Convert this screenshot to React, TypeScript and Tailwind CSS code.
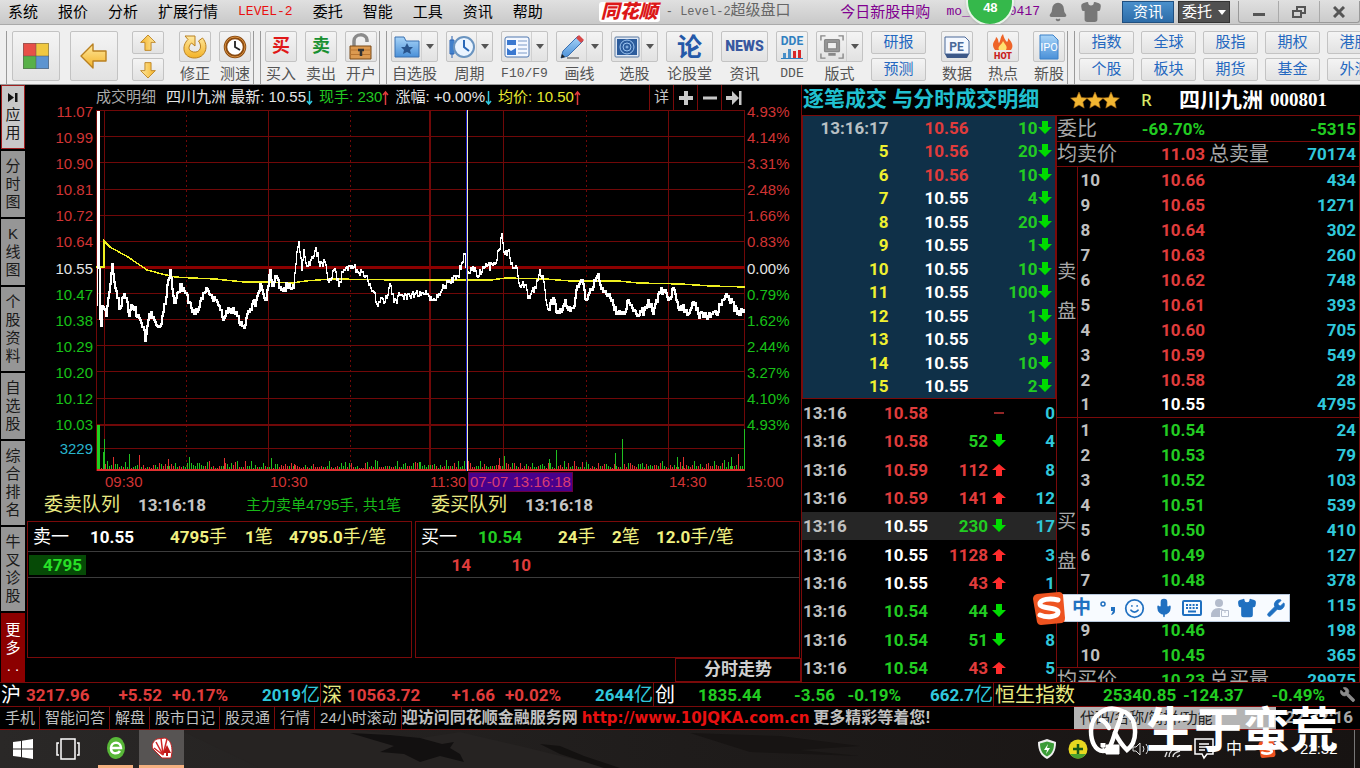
import React from 'react';
import { Bell, Shirt, Wrench, Mic, Smile } from 'lucide-react';

type Tone = 'red' | 'green' | 'white';
type Dir = 'up' | 'down' | 'flat';

const toneClass: Record<Tone, string> = {
    red: 'text-[#e03c3c]',
    green: 'text-[#22cc22]',
    white: 'text-white',
};

// Bold condensed figures used in every quote table
const NUM = "font-['Roboto','Noto_Sans_CJK_SC',sans-serif] font-bold text-[17px] leading-5";
const TOOL_BTN = 'flex items-center justify-center rounded-[2px] border border-[#c3c3c3] bg-linear-to-b from-[#f4f4f4] to-[#e2e2e2]';

const sideTabs = [
    { label: '分时图', size: 'h-[66px]' },
    { label: 'K线图', size: 'h-[66px]' },
    { label: '个股资料', size: 'h-[84px]' },
    { label: '自选股', size: 'h-[66px]' },
    { label: '综合排名', size: 'h-[84px]' },
    { label: '牛叉诊股', size: 'h-[84px]' },
];

const prices = ['11.07', '10.99', '10.90', '10.81', '10.72', '10.64', '10.55', '10.47', '10.38', '10.29', '10.20', '10.12', '10.03'];
const percents = ['4.93%', '4.14%', '3.31%', '2.48%', '1.66%', '0.83%', '0.00%', '0.79%', '1.62%', '2.44%', '3.27%', '4.10%', '4.93%'];

const ticks: { t: string; p: string; tone: Tone; v: string }[] = [
    { t: '13:16:17', p: '10.56', tone: 'red', v: '10' },
    { t: '5', p: '10.56', tone: 'red', v: '20' },
    { t: '6', p: '10.56', tone: 'red', v: '10' },
    { t: '7', p: '10.55', tone: 'white', v: '4' },
    { t: '8', p: '10.55', tone: 'white', v: '20' },
    { t: '9', p: '10.55', tone: 'white', v: '1' },
    { t: '10', p: '10.55', tone: 'white', v: '10' },
    { t: '11', p: '10.55', tone: 'white', v: '100' },
    { t: '12', p: '10.55', tone: 'white', v: '1' },
    { t: '13', p: '10.55', tone: 'white', v: '9' },
    { t: '14', p: '10.55', tone: 'white', v: '10' },
    { t: '15', p: '10.55', tone: 'white', v: '2' },
];

const trades: { p: string; tone: Tone; v: string; dir: Dir; n: string; active?: boolean }[] = [
    { p: '10.58', tone: 'red', v: '', dir: 'flat', n: '0' },
    { p: '10.58', tone: 'red', v: '52', dir: 'down', n: '4' },
    { p: '10.59', tone: 'red', v: '112', dir: 'up', n: '8' },
    { p: '10.59', tone: 'red', v: '141', dir: 'up', n: '12' },
    { p: '10.55', tone: 'white', v: '230', dir: 'down', n: '17', active: true },
    { p: '10.55', tone: 'white', v: '1128', dir: 'up', n: '3' },
    { p: '10.55', tone: 'white', v: '43', dir: 'up', n: '1' },
    { p: '10.54', tone: 'green', v: '44', dir: 'down', n: '' },
    { p: '10.54', tone: 'green', v: '51', dir: 'down', n: '8' },
    { p: '10.54', tone: 'green', v: '43', dir: 'up', n: '5' },
];

type Level = [string, string, string, Tone];
const asks: Level[] = [
    ['10', '10.66', '434', 'red'], ['9', '10.65', '1271', 'red'], ['8', '10.64', '302', 'red'],
    ['7', '10.63', '260', 'red'], ['6', '10.62', '748', 'red'], ['5', '10.61', '393', 'red'],
    ['4', '10.60', '705', 'red'], ['3', '10.59', '549', 'red'], ['2', '10.58', '28', 'red'],
    ['1', '10.55', '4795', 'white'],
];
const bids: Level[] = [
    ['1', '10.54', '24', 'green'], ['2', '10.53', '79', 'green'], ['3', '10.52', '103', 'green'],
    ['4', '10.51', '539', 'green'], ['5', '10.50', '410', 'green'], ['6', '10.49', '127', 'green'],
    ['7', '10.48', '378', 'green'], ['', '', '115', 'green'], ['9', '10.46', '198', 'green'],
    ['10', '10.45', '365', 'green'],
];

// Chart series, plot box is 648 x 361
const pricePts: [number, number][] = [
    [4, 158], [4, 201], [6, 216], [7, 196], [11, 206], [13, 188], [17, 154], [20, 178], [22, 188], [25, 198],
    [29, 184], [31, 188], [34, 206], [37, 196], [44, 208], [49, 220], [50, 231], [53, 210], [56, 202], [60, 212],
    [64, 217], [67, 206], [70, 194], [73, 170], [75, 160], [78, 186], [80, 193], [85, 174], [88, 178], [94, 192],
    [97, 202], [102, 202], [106, 188], [111, 178], [117, 188], [124, 196], [128, 210], [133, 198], [140, 204],
    [148, 216], [154, 202], [161, 190], [165, 174], [171, 190], [175, 160], [177, 176], [181, 166], [186, 180],
    [194, 174], [198, 178], [201, 142], [203, 132], [206, 160], [208, 140], [211, 156], [215, 150], [220, 138],
    [224, 156], [229, 152], [233, 172], [238, 160], [243, 176], [248, 160], [254, 156], [261, 160], [268, 166],
    [274, 174], [278, 182], [281, 194], [286, 188], [289, 192], [294, 174], [298, 192], [304, 185], [314, 186],
    [324, 182], [332, 184], [337, 190], [346, 180], [354, 172], [362, 166], [367, 152], [369, 144], [371, 168],
    [372, 162], [379, 158], [383, 166], [388, 158], [399, 154], [403, 140], [406, 124], [408, 142], [413, 140],
    [415, 154], [421, 158], [424, 176], [427, 172], [433, 186], [440, 178], [444, 160], [448, 172], [452, 199],
    [457, 188], [460, 202], [465, 202], [469, 190], [472, 200], [477, 198], [481, 176], [485, 170], [490, 190],
    [495, 180], [501, 166], [506, 178], [514, 188], [520, 204], [528, 204], [532, 190], [536, 198], [541, 206],
    [548, 200], [552, 190], [557, 204], [563, 182], [568, 180], [572, 190], [578, 180], [582, 198], [590, 200],
    [592, 204], [597, 192], [602, 204], [612, 206], [620, 204], [626, 190], [631, 187], [636, 192], [641, 204], [648, 200],
];

const avgLine = '0,157 8,157 8,131 14,137 32,147 51,160 66,164 79,167 96,168 119,169 148,172 174,172 196,173 209,171 234,169 304,170 394,170 409,168 449,169 474,171 522,171 542,173 584,174 614,176 648,177';

const spikes: [number, number, 'r' | 'g'][] = [
    [7, 18, 'g'], [8, 31, 'g'], [17, 13, 'r'], [33, 16, 'g'], [43, 15, 'r'], [72, 11, 'r'], [93, 13, 'g'], [128, 12, 'r'],
    [175, 12, 'g'], [198, 6, 'r'], [233, 9, 'g'], [279, 10, 'g'], [369, 9, 'r'], [402, 12, 'r'], [407, 14, 'g'], [452, 11, 'g'],
    [459, 20, 'g'], [518, 17, 'g'], [525, 31, 'g'], [580, 13, 'g'], [586, 13, 'r'], [597, 9, 'g'], [634, 13, 'g'], [641, 16, 'r'], [647, 41, 'g'],
];

const noise = (i: number) => {
    const x = Math.sin(i * 127.1) * 43758.5453;
    return x - Math.floor(x);
};

const buildPricePath = () => {
    let d = '';
    pricePts.forEach(([x, y], i) => {
        if (i === 0) { d = `M${x} ${y}`; return; }
        const [px, py] = pricePts[i - 1];
        for (let s = px + 1; s <= x; s++) {
            const k = (s - px) / (x - px);
            const jitter = s === x ? 0 : Math.round((noise(s) - 0.5) * 8);
            d += `V${Math.round(py + (y - py) * k) + jitter}H${s}`;
        }
    });
    return d;
};

const hLines = [26, 52, 79, 105, 131, 183, 209, 235, 261, 288, 338];

const Chart: React.FC = () => (
    <svg viewBox="0 0 648 361" preserveAspectRatio="none" className="block w-full h-full" shapeRendering="crispEdges">
        <g stroke="#700808" strokeWidth="1">
            {hLines.map(y => <path key={y} d={`M0 ${y + 0.5}H648`} />)}
            <path d="M0 .5H648M.5 0V361M8.5 0V361M172.5 0V361M406.5 0V361M571.5 0V361M647.5 0V361" />
            <path d="M90.5 0V361M254.5 0V361M489.5 0V361" strokeDasharray="2 3" />
            <path d="M0 315H648" strokeWidth="2" />
            <path d="M333 0V361" strokeWidth="2" />
            <path d="M0 157.500H648" stroke="#8c0000" strokeWidth="3" />
        </g>
        {/* Volume */}
        {Array.from({ length: 322 }, (_, i) => {
            const h = 1 + Math.round(noise(i + 11) ** 3 * 7 + noise(i + 500) * 2);
            return <rect key={i} x={3 + i * 2} y={359 - h} width="1" height={h} fill={noise(i + 77) > 0.5 ? '#e03030' : '#20c020'} />;
        })}
        {spikes.map(([x, h, c]) => <rect key={x} x={x} y={360 - h} width="1" height={h} fill={c === 'r' ? '#e03030' : '#20c020'} />)}
        <rect x="1" y="315" width="3" height="45" fill="#20d020" />
        <rect x="1" y="359" width="647" height="2" fill="#e03030" />
        <polyline points={avgLine} fill="none" stroke="#f0f020" strokeWidth="1.5" />
        <path d={buildPricePath()} fill="none" stroke="#fff" strokeWidth="1.6" />
        <rect x="1" y="1" width="3" height="158" fill="#fff" />
        <path d="M1 158V196" stroke="#fff" />
        {/* Cross cursor */}
        <rect x="369" y="0" width="1" height="361" fill="#1818c8" />
        <rect x="370" y="0" width="1" height="361" fill="#f0eeb0" />
    </svg>
);

const Arrow: React.FC<{ dir: Dir }> = ({ dir }) => (
    <svg viewBox="0 0 14 14" className="block w-3.5 h-3.5" role="img" aria-label={dir}>
        {dir === 'flat' && <path d="M2 7h10" stroke="#e03c3c" strokeWidth="1.3" />}
        {dir === 'down' && <path d="M4 0h6v6h4L7 13 0 6h4z" fill="#00dc00" />}
        {dir === 'up' && <path d="M4 13h6V7h4L7 1 0 7h4z" fill="#ff2c2c" />}
    </svg>
);

// Thin arrow behind a header figure
const Mark: React.FC<{ up?: boolean }> = ({ up }) => (
    <svg viewBox="0 0 7 16" className={`w-[7px] h-4 ${up ? 'text-[#e03c3c]' : 'text-[#30c8e0]'}`} fill="none" stroke="currentColor" strokeWidth="1.5">
        {up ? <path d="M3.5 15V2M1 5l2.500-3L6 5" /> : <path d="M3.500 1v13M1 11l2.500 3L6 11" />}
    </svg>
);

const Caret: React.FC<{ className?: string }> = ({ className = 'text-[#555]' }) => (
    <svg viewBox="0 0 8 5" className={`w-2 h-[5px] ${className}`}><path d="M0 0h8L4 5z" fill="currentColor" /></svg>
);

const Handle: React.FC<{ first?: boolean }> = ({ first }) => (
    <div className={`flex h-[54px] justify-between shrink-0 ${first ? 'w-3' : 'w-3.5'}`}>
        {first ? null : <span className="ml-0.5 w-px bg-[#9a9a9a]" />}
        <span className={`w-[3px] border-r border-b border-[#9a9a9a] ${first ? 'ml-1' : 'mr-1'}`} />
    </div>
);

interface ToolProps {
    label: string;
    wide?: boolean;
    split?: boolean;
    mono?: boolean;
    children: React.ReactNode;
}

const Tool: React.FC<ToolProps> = ({ label, wide, split, mono, children }) => (
    <button className={`flex flex-col items-center shrink-0 ${wide ? 'w-[47px]' : 'w-8'}`}>
        <span className={`${TOOL_BTN} h-[31px] w-full`}>
            <span className="flex flex-1 items-center justify-center">{children}</span>
            {split && <span className="flex h-full w-4 items-center justify-center border-l border-[#d0d0d0]"><Caret /></span>}
        </span>
        <span className={`mt-0.5 leading-5 whitespace-nowrap text-[#555] ${mono ? "font-['Liberation_Mono',monospace] text-[13px]" : 'text-[15px]'}`}>{label}</span>
    </button>
);

const TextTool: React.FC<{ label: string }> = ({ label }) => (
    <button className={`${TOOL_BTN} h-[23px] w-[55px] shrink-0 text-[15px] text-[#2468c0]`}>{label}</button>
);

const GoldArrow: React.FC<{ className: string }> = ({ className }) => (
    <svg viewBox="0 0 28 26" className={className}>
        <path d="M1 13 13 1v7h13v10H13v7z" fill="url(#gold)" stroke="#b98020" strokeWidth="1.4" strokeLinejoin="round" />
    </svg>
);

const SogouLogo: React.FC<{ className: string }> = ({ className }) => (
    <svg viewBox="0 0 34 34" className={className}>
        <path d="M5 3 27 1q3 0 4 3l2 23q0 4-3 5L9 34q-3 0-4-3L1 8q0-4 4-5z" fill="#ee5320" />
        <path d="M26 9C18 7 8 8 8 13s18 3 18 8-11 6-18 3" fill="none" stroke="#fff" strokeWidth="5" strokeLinecap="round" />
    </svg>
);

const MenuBar: React.FC = () => (
    <header className="relative flex h-[25px] items-center overflow-hidden border-b border-[#aaa] bg-linear-to-b from-[#e0e0e0] to-[#c9c9c9] pl-2 text-[15px] whitespace-nowrap text-black">
        <nav className="flex shrink-0 gap-5">
            <button>系统</button>
            <button>报价</button>
            <button>分析</button>
            <button>扩展行情</button>
            <button className="font-['Liberation_Mono',monospace] text-[13px] text-[#e81010]">LEVEL-2</button>
            <button>委托</button>
            <button>智能</button>
            <button>工具</button>
            <button>资讯</button>
            <button>帮助</button>
        </nav>
        <div className="ml-14 flex shrink-0 items-center gap-1.5">
            <span className="rounded-[3px] bg-white px-0.5 text-[19px] leading-5 font-black text-[#dc1818] italic">同花顺</span>
            <span className="font-['Liberation_Mono','Noto_Sans_CJK_SC',monospace] text-[12px] text-[#666]">- Level-2<span className="text-[15px]">超级盘口</span></span>
        </div>
        <div className="ml-auto flex shrink-0 items-center text-[#800090]">
            <a href="#ipo">今日新股申购</a>
            <span className="relative ml-4 font-['Liberation_Mono',monospace] text-[13px]">mo_375770417
                <span className="absolute -top-6 left-5 flex h-12 w-12 items-end justify-center rounded-full border-2 border-[#e8f4e8] bg-[#35b84b] pb-2 font-['Liberation_Sans',sans-serif] leading-4 font-bold text-white shadow">48</span>
            </span>
            <button aria-label="消息" className="ml-2 text-[#777]"><Bell size={20} fill="currentColor" /></button>
            <button aria-label="皮肤" className="ml-3 text-[#777]"><Shirt size={22} fill="currentColor" /></button>
            <button className="ml-5 h-[22px] w-[52px] border border-[#1f4f80] bg-linear-to-b from-[#4a90cc] to-[#2c6ca8] leading-5 text-white">资讯</button>
            <button className="ml-1 flex h-[22px] w-[52px] items-center justify-center gap-1.5 border border-[#333] bg-[#505050] text-white">委托<Caret className="text-white" /></button>
            <div className="ml-2 flex h-[22px] w-[122px] divide-x divide-[#aaa] rounded-b-[3px] border border-t-0 border-[#999] text-[#555]">
                <button aria-label="最小化" className="flex flex-1 items-end justify-center pb-1.5"><span className="h-[3px] w-3 bg-[#555]" /></button>
                <button aria-label="还原" className="flex flex-1 items-center justify-center">
                    <svg viewBox="0 0 14 12" className="w-3.5 h-3" fill="none" stroke="currentColor" strokeWidth="2"><path d="M1 5h8v6H1zM5 4V1h8v6h-3" /></svg>
                </button>
                <button aria-label="关闭" className="flex flex-1 items-center justify-center">
                    <svg viewBox="0 0 12 12" className="w-3 h-3" stroke="currentColor" strokeWidth="3"><path d="m1 1 10 10M11 1 1 11" /></svg>
                </button>
            </div>
        </div>
    </header>
);

const Toolbar: React.FC = () => (
    <div className="flex h-[60px] items-start overflow-hidden border-b border-[#999] bg-[#efefef] pt-1.5">
        <svg className="absolute h-0 w-0">
            <defs>
                <linearGradient id="gold" x1="0" y1="0" x2="0" y2="1"><stop offset="0" stopColor="#ffe9a0" /><stop offset="1" stopColor="#f3b226" /></linearGradient>
                <linearGradient id="sky" x1="0" y1="0" x2="0" y2="1"><stop offset="0" stopColor="#a8d4f8" /><stop offset="1" stopColor="#4a90d8" /></linearGradient>
            </defs>
        </svg>
        <Handle first />
        <button aria-label="首页" className={`${TOOL_BTN} h-[50px] w-12 shrink-0`}>
            <svg viewBox="0 0 26 26" className="w-[26px] h-[26px]">
                <path d="M0 0h13v13H0z" fill="#e85048" /><path d="M13 0h13v13H13z" fill="#f0c840" />
                <path d="M0 13h13v13H0z" fill="#58b048" /><path d="M13 13h13v13H13z" fill="#5c94d0" />
                <path d="M.5.5h25v25H.5zM13 0v26M0 13h26" fill="none" stroke="#555" strokeOpacity=".5" />
            </svg>
        </button>
        <button aria-label="后退" className={`${TOOL_BTN} ml-2.5 h-[50px] w-12 shrink-0`}><GoldArrow className="w-7 h-[26px]" /></button>
        <div className="ml-3.5 flex w-8 shrink-0 flex-col gap-1">
            <button aria-label="上一个" className={`${TOOL_BTN} h-[23px]`}><GoldArrow className="h-4 w-[18px] rotate-90" /></button>
            <button aria-label="下一个" className={`${TOOL_BTN} h-[23px]`}><GoldArrow className="h-4 w-[18px] -rotate-90" /></button>
        </div>
        <div className="ml-[15px] flex gap-2">
            <Tool label="修正">
                <svg viewBox="0 0 26 26" className="w-[26px] h-[26px]">
                    <path d="M3 2h10v10l-3.500-3c-4 4-3 8 2 9 7 1 9-6 5-11l4-3c7 8 3 20-8 20C1 24-1 12 6 5.500z" fill="url(#gold)" stroke="#b98020" strokeLinejoin="round" />
                </svg>
            </Tool>
            <Tool label="测速">
                <svg viewBox="0 0 24 24" className="w-6 h-6">
                    <circle cx="12" cy="12" r="9.500" fill="#fff" stroke="#8a4a10" strokeWidth="3.500" /><circle cx="12" cy="12" r="10" fill="none" stroke="#d89040" />
                    <path d="M12 6v6l5 3" fill="none" stroke="#222" strokeWidth="1.800" />
                </svg>
            </Tool>
        </div>
        <Handle />
        <div className="flex gap-2">
            <Tool label="买入"><b className="text-[18px] text-[#e01818]">买</b></Tool>
            <Tool label="卖出"><b className="text-[18px] text-[#189030]">卖</b></Tool>
            <Tool label="开户">
                <svg viewBox="0 0 24 28" className="w-6 h-7">
                    <path d="M5 13V8c0-8 13-8 13-1v2" fill="none" stroke="#8a8a8a" strokeWidth="3.500" /><path d="M1 13h21v13H1z" fill="#dc9a50" stroke="#7a4a18" />
                    <path d="M1 17h21M1 21.500h21" stroke="#b87430" /><path d="M9 17h6M12 17v6" stroke="#333" strokeWidth="2.500" />
                </svg>
            </Tool>
        </div>
        <Handle />
        <div className="flex gap-2">
            <Tool label="自选股" wide split>
                <svg viewBox="0 0 26 24" className="w-[26px] h-6"><path d="M1 22V2h9l2 4h13v16z" fill="url(#sky)" stroke="#3a70b0" /><path d="m13 8 2 4h4l-3 3 1 4-4-2-4 2 1-4-3-3h4z" fill="#28548c" /></svg>
            </Tool>
            <Tool label="周期" wide split>
                <svg viewBox="0 0 26 26" className="w-[26px] h-[26px]">
                    <path d="M1 6h4v14H1zM3 2v22" fill="#5aa0e8" stroke="#2860b0" /><circle cx="15" cy="13" r="10" fill="#eaf4ff" stroke="#6a94c0" strokeWidth="2" />
                    <path d="M15 6v7l5 4" fill="none" stroke="#2868b8" strokeWidth="2" />
                </svg>
            </Tool>
            <Tool label="F10/F9" wide split mono>
                <svg viewBox="0 0 26 22" className="w-[26px] h-[22px]"><rect x="1" y="1" width="24" height="20" rx="2" fill="#f4f8ff" stroke="#5078b0" /><path d="M3 4h9v5H3zM3 12l4 3 5-3v7H3z" fill="#3a78d0" /><path d="M14 5h9M14 9h9M14 13h9M14 17h9" stroke="#7a9ac8" /></svg>
            </Tool>
            <Tool label="画线" wide split>
                <svg viewBox="0 0 26 26" className="w-[26px] h-[26px]"><path d="M2 24 4 17 19 2l5 5L9 22z" fill="url(#sky)" stroke="#3a70b0" /><path d="m17 4 3-3 5 5-3 3z" fill="#d84848" /><path d="m2 24 1-4 3 3z" fill="#222" /><path d="M8 24h12" stroke="#444" /></svg>
            </Tool>
            <Tool label="选股" wide split>
                <svg viewBox="0 0 26 22" className="w-[26px] h-[22px]"><rect x="1" y="1" width="24" height="20" rx="1" fill="#e0e8f4" stroke="#5878a0" /><path d="M3 3h20v16H3z" fill="#2c5c9c" /><g fill="none" stroke="#9cc4f0"><circle cx="13" cy="11" r="7" /><circle cx="13" cy="11" r="4" /><circle cx="13" cy="11" r="1" /></g></svg>
            </Tool>
            <Tool label="论股堂" wide><b className="text-[25px] leading-7 text-[#2458a8]">论</b></Tool>
            <Tool label="资讯" wide><b className="font-['Roboto',sans-serif] text-[14px] font-black text-[#3858a0]">NEWS</b></Tool>
            <Tool label="DDE" mono>
                <span className="flex flex-col items-center">
                    <b className="font-['Roboto',sans-serif] text-[12px] leading-3 text-[#3080c0]">DDE</b>
                    <svg viewBox="0 0 24 12" className="w-6 h-3"><path d="M3 6h3v5H3zM8 2h3v9H8z" fill="#4a90c8" /><path d="M13 4h3v7h-3zM18 3h3v8h-3z" fill="#d82828" /><path d="M1 11.500h22" stroke="#3080c0" /></svg>
                </span>
            </Tool>
            <Tool label="版式" wide split>
                <svg viewBox="0 0 26 26" className="w-6 h-6" fill="none" stroke="#888" strokeWidth="1.500"><path d="M1 6V1h5M20 1h5v5M1 20v5h5M20 25h5v-5" /><rect x="5" y="5" width="16" height="13" rx="1" fill="#999" /><path d="M8 8h10v7H8z" fill="#eee" /><path d="M9 21h8" strokeWidth="3" /></svg>
            </Tool>
            <div className="flex flex-col gap-1"><TextTool label="研报" /><TextTool label="预测" /></div>
        </div>
        <div className="ml-[15px] flex gap-3.5">
            <Tool label="数据">
                <svg viewBox="0 0 26 24" className="w-[26px] h-6"><path d="M1 2h20l4 4v13H1z" fill="#f4f8ff" stroke="#4a6898" /><path d="M1 19h24l-2 4H3z" fill="#3c5888" /><text x="12.500" y="15.500" textAnchor="middle" fontFamily="Roboto" fontWeight="700" fontSize="12" fill="#4a6898">PE</text></svg>
            </Tool>
            <Tool label="热点">
                <svg viewBox="0 0 24 26" className="w-6 h-[26px]"><path d="M4 16C-1 9 5 7 5 3c3 2 2 5 3 6 2-3 1-6 4-9 1 4 2 6 4 8 1-1 1-2 1-4 4 4 6 8 3 12z" fill="#ee6428" /><path d="M8 16c-2-4 3-5 4-9 2 4 5 5 3 9z" fill="#ffe070" /><text x="12" y="25" textAnchor="middle" fontFamily="Roboto" fontWeight="900" fontSize="9" fill="#c82020">HOT</text></svg>
            </Tool>
            <Tool label="新股">
                <svg viewBox="0 0 22 26" className="w-[22px] h-[26px]"><path d="M2 1h13l5 5v19H2z" fill="url(#sky)" stroke="#3a80c8" /><text x="11" y="17" textAnchor="middle" fontFamily="Roboto" fontSize="11" fill="#fff">IPO</text></svg>
            </Tool>
        </div>
        <Handle />
        <div className="grid shrink-0 grid-flow-col grid-rows-2 gap-x-[7px] gap-y-1">
            {['指数', '个股', '全球', '板块', '股指', '期货', '期权', '基金', '港股', '外汇'].map(l => <TextTool key={l} label={l} />)}
        </div>
    </div>
);

const SideTabs: React.FC = () => (
    <nav className="flex w-[26px] shrink-0 flex-col gap-0.5 pr-px pl-px text-[15px] leading-[18px] text-[#1a1a1a]">
        <button className="flex h-16 flex-col items-center justify-center border border-[#a02020] bg-[#c8c8c8]">
            <svg viewBox="0 0 10 9" className="mb-1 w-2.5 h-[9px]"><path d="M0 0v9l6-4.500zM7 0h2.500v9H7z" fill="#111" /></svg>
            <span className="w-4">应用</span>
        </button>
        {sideTabs.map(t => (
            <button key={t.label} className={`flex items-center justify-center bg-[#969696] ${t.size}`}>
                <span className="w-4 break-all">{t.label}</span>
            </button>
        ))}
        <button className="flex flex-1 items-center justify-center bg-[#8c0000] text-white"><span className="w-4 break-all">更多<br />. .</span></button>
    </nav>
);

const Axis: React.FC<{ values: string[]; side: 'left' | 'right' }> = ({ values, side }) => (
    <div className={`flex shrink-0 flex-col pt-[13px] pb-[13px] leading-none ${side === 'left' ? 'w-[70px] items-end pr-[3px]' : 'w-14 pl-0.5'}`}>
        {values.map((v, i) => (
            <span key={i} className={`flex flex-1 items-center ${i < 6 ? 'text-[#d03434]' : i === 6 ? 'text-[#e4e4e4]' : 'text-[#18c018]'}`}>{v}</span>
        ))}
        <span className="flex h-5 items-center text-[#28b4cc]">{side === 'left' ? '3229' : ''}</span>
    </div>
);

const Unit: React.FC<{ children: React.ReactNode }> = ({ children }) => <span className="text-[18px] font-normal">{children}</span>;

interface QueueProps {
    side: string;
    price: string;
    tone: Tone;
    hands: string;
    count: string;
    avg: string;
    children: React.ReactNode;
}

const QueueBox: React.FC<QueueProps> = ({ side, price, tone, hands, count, avg, children }) => (
    <div className={`flex-1 border border-[#7a0a0a] ${NUM}`}>
        <div className="flex h-[30px] items-center border-b border-[#3c3c3c] pl-[5px] text-[#f0f080]">
            <span className="w-[57px] text-[18px] font-normal text-white">{side}</span>
            <span className={`w-20 ${toneClass[tone]}`}>{price}</span>
            <span className={tone === 'white' ? 'w-[75px]' : 'w-[54px]'}>{hands}<Unit>手</Unit></span>
            <span className="w-11">{count}<Unit>笔</Unit></span>
            <span>{avg}<Unit>手/笔</Unit></span>
        </div>
        <div className="flex h-[26px] items-center border-b border-[#3c3c3c]">{children}</div>
    </div>
);

const ChartPanel: React.FC = () => (
    <section className="flex min-w-0 flex-1 flex-col">
        <div className="flex min-h-0 flex-1 text-[15px]">
            <Axis values={prices} side="left" />
            <div className="flex min-w-0 flex-1 flex-col">
                <div className="flex h-[25px] shrink-0 items-center whitespace-nowrap text-[#e4e4e4]">
                    <span className="w-[70px] text-[#aaa]">成交明细</span>
                    <span>四川九洲 最新: 10.55</span><Mark />
                    <span className="ml-1.5 text-[#22c822]">现手: 230</span><Mark up />
                    <span className="ml-1.5">涨幅: +0.00%</span><Mark />
                    <span className="ml-1.5 text-[#e8e830]">均价: 10.50</span><Mark up />
                    <div className="ml-auto flex h-full text-[#c8c8c8]">
                        <button className="w-6 border-l border-[#7a0a0a]">详</button>
                        <button aria-label="放大" className="flex w-6 items-center justify-center border-l border-[#7a0a0a]"><svg viewBox="0 0 14 14" className="w-3.5 h-3.5"><path d="M7 0v14M0 7h14" stroke="currentColor" strokeWidth="4" /></svg></button>
                        <button aria-label="缩小" className="flex w-6 items-center justify-center border-l border-[#7a0a0a]"><svg viewBox="0 0 14 14" className="w-3.5 h-3.5"><path d="M0 7h14" stroke="currentColor" strokeWidth="3" /></svg></button>
                        <button aria-label="收起" className="flex w-6 items-center justify-center border-l border-[#7a0a0a]"><svg viewBox="0 0 16 14" className="w-4 h-3.5"><path d="M0 5h6V0l7 7-7 7V9H0zM13 0h2.500v14H13z" fill="currentColor" /></svg></button>
                    </div>
                </div>
                <div className="min-h-0 flex-1"><Chart /></div>
            </div>
            <Axis values={percents} side="right" />
        </div>

        <div className="flex h-[22px] items-center pl-[79px] text-[15px] whitespace-nowrap text-[#d03434]">
            <span className="w-[165px]">09:30</span>
            <span className="w-40">10:30</span>
            <span className="w-[38px]">11:30</span>
            <span className="flex h-5 items-center border border-[#6a0040] bg-[#48008c] px-px text-[#d83c74]">07-07 13:16:18</span>
            <span className="ml-auto w-[77px]">14:30</span>
            <span className="w-[55px]">15:00</span>
        </div>

        <div className="mb-1 flex h-6 items-center pl-[18px]">
            <span className="w-[94px] text-[19px] leading-6 text-[#e8e880]">委卖队列</span>
            <span className={`w-[108px] text-[#c4c4c4] ${NUM}`}>13:16:18</span>
            <span className="w-[185px] text-[15px] text-[#18b818]">主力卖单4795手, 共1笔</span>
            <span className="w-[94px] text-[19px] leading-6 text-[#e8e880]">委买队列</span>
            <span className={`text-[#c4c4c4] ${NUM}`}>13:16:18</span>
        </div>
        <div className="flex h-[137px] gap-[3px] pr-px pl-px">
            <QueueBox side="卖一" price="10.55" tone="white" hands="4795" count="1" avg="4795.0">
                <span className="ml-px w-[57px] bg-[#064a06] pr-1 text-right text-[#28e028]">4795</span>
            </QueueBox>
            <QueueBox side="买一" price="10.54" tone="green" hands="24" count="2" avg="12.0">
                <span className="w-[55px] text-right text-[#e03c3c]">14</span>
                <span className="w-[60px] text-right text-[#e03c3c]">10</span>
            </QueueBox>
        </div>
        <div className="flex h-6 justify-end">
            <button className="w-[126px] border border-[#7a0a0a] text-[17px] leading-5 font-bold text-[#d0d0d0]">分时走势</button>
        </div>
    </section>
);

const TradePanel: React.FC = () => (
    <section className={`flex w-[255px] shrink-0 flex-col border-l border-[#7a0a0a] ${NUM}`}>
        <h2 className="h-[30px] pl-px text-[21px] leading-7 whitespace-nowrap text-[#20c0d0]">逐笔成交 与分时成交明细</h2>
        <table className="h-[284px] w-full border border-[#7a0a0a] bg-[#0f3048]">
            <tbody>
                {ticks.map((r, i) => (
                    <tr key={i}>
                        <td className={`w-[86px] text-right ${i === 0 ? 'text-[#b8c0c4]' : 'text-[#f0f030]'}`}>{r.t}</td>
                        <td className={`w-20 text-right ${toneClass[r.tone]}`}>{r.p}</td>
                        <td className="text-right text-[#22cc22]">{r.v}</td>
                        <td className="w-[18px]"><Arrow dir="down" /></td>
                    </tr>
                ))}
            </tbody>
        </table>
        <table className="w-full flex-1">
            <tbody>
                {trades.map((r, i) => (
                    <tr key={i} className={`h-7 ${r.active ? 'bg-[#262626]' : ''}`}>
                        <td className="pl-px text-[#c0c0c0]">13:16</td>
                        <td className={`w-20 text-right ${toneClass[r.tone]}`}>{r.p}</td>
                        <td className={`w-[60px] text-right ${r.dir === 'up' ? 'text-[#e03c3c]' : 'text-[#22cc22]'}`}>{r.v}</td>
                        <td className="w-5 pl-1"><Arrow dir={r.dir} /></td>
                        <td className="w-[48px] pr-px text-right text-[#30c8dc]">{r.n}</td>
                    </tr>
                ))}
            </tbody>
        </table>
    </section>
);

const LevelTable: React.FC<{ name: string; rows: Level[] }> = ({ name, rows }) => (
    <table className="w-full border-b border-[#7a0a0a]">
        <tbody>
            {rows.map(([lv, p, q, tone], i) => (
                <tr key={i} className="h-[25px]">
                    {i === 0 && (
                        <th rowSpan={10} scope="rowgroup" className="w-5 border-r border-[#7a0a0a] text-[19px] leading-10 font-normal text-[#a8a8a8]">
                            {name.split('').map(c => <span key={c} className="block">{c}</span>)}
                        </th>
                    )}
                    <td className="pl-[3px] text-[#c0c0c0]">{lv}</td>
                    <td className={`w-20 text-right ${toneClass[tone]}`}>{p}</td>
                    <td className="w-[154px] pr-[3px] text-right text-[#30c8dc]">{q}</td>
                </tr>
            ))}
        </tbody>
    </table>
);

const Summary: React.FC<{ name: string; v: string; tone: Tone; name2?: string; v2: string; v2Class: string }> = ({ name, v, tone, name2, v2, v2Class }) => (
    <div className="flex h-[25px] shrink-0 items-center border-b border-[#7a0a0a] pr-[3px]">
        <span className="w-16 text-[20px] font-normal text-[#a8a8a8]">{name}</span>
        <span className={`w-[84px] text-right ${toneClass[tone]}`}>{v}</span>
        <span className="ml-1 text-[20px] font-normal text-[#a8a8a8]">{name2}</span>
        <span className={`ml-auto ${v2Class}`}>{v2}</span>
    </div>
);

const OrderBook: React.FC = () => (
    <section className={`flex w-[304px] shrink-0 flex-col overflow-hidden ${NUM}`}>
        <div className="flex h-[30px] shrink-0 items-center pb-px pl-3.5 whitespace-nowrap">
            <svg viewBox="0 0 50 18" className="w-[50px] h-[18px]">
                {[0, 16, 32].map(x => <path key={x} transform={`translate(${x} 1)`} d="m9 0 2.400 5.500 6 .6-4.500 4 1.300 6L9 13l-5.200 3.100 1.300-6-4.500-4 6-.6z" fill="#f2b632" stroke="#a86c14" strokeWidth=".6" />)}
            </svg>
            <span className="ml-[21px] w-[38px] font-['Noto_Sans',sans-serif] font-medium text-[#d8e868]">R</span>
            <span className="text-[21px] text-white">四川九洲</span>
            <span className="ml-[7px] font-['Liberation_Serif',serif] text-[19px] text-white">000801</span>
        </div>
        <div className="flex min-h-0 flex-1 flex-col overflow-hidden border border-b-0 border-[#7a0a0a] pt-px">
            <Summary name="委比" v="-69.70%" tone="green" v2="-5315" v2Class="text-[#22cc22]" />
            <Summary name="均卖价" v="11.03" tone="red" name2="总卖量" v2="70174" v2Class="text-[#30c8dc]" />
            <LevelTable name="卖盘" rows={asks} />
            <LevelTable name="买盘" rows={bids} />
            <Summary name="均买价" v="10.23" tone="green" name2="总买量" v2="29975" v2Class="text-[#30c8dc]" />
        </div>
    </section>
);

interface IndexProps {
    name: string;
    nameClass: string;
    tone: Tone;
    value: string;
    change: string;
    pct: string;
    amount?: string;
    className: string;
}

const IndexCell: React.FC<IndexProps> = ({ name, nameClass, tone, value, change, pct, amount, className }) => (
    <div className={`flex shrink-0 items-center border-r border-[#7a0a0a] pl-px ${toneClass[tone]} ${className}`}>
        <span className={`shrink-0 text-[20px] font-normal ${nameClass}`}>{name}</span>
        <span className="w-[74px] shrink-0">{value}</span>
        <span className="flex-1 text-right">{change}</span>
        <span className="w-[66px] shrink-0 text-right">{pct}</span>
        {amount && <span className="w-[92px] shrink-0 text-right text-[#30c8dc]">{amount}<span className="text-[19px] font-normal">亿</span></span>}
    </div>
);

const IndexBar: React.FC = () => (
    <div className={`flex h-[25px] shrink-0 border-y border-[#7a0a0a] whitespace-nowrap ${NUM}`}>
        <IndexCell className="w-[321px]" name="沪" nameClass="w-[25px] text-white" tone="red" value="3217.96" change="+5.52" pct="+0.17%" amount="2019" />
        <IndexCell className="w-[333px]" name="深" nameClass="w-[25px] text-[#e8e880]" tone="red" value="10563.72" change="+1.66" pct="+0.02%" amount="2644" />
        <IndexCell className="w-[340px]" name="创" nameClass="w-[43px] text-white" tone="green" value="1835.44" change="-3.56" pct="-0.19%" amount="662.7" />
        <div className="flex flex-1 items-center pr-1 text-[#22cc22]">
            <span className="ml-px w-[108px] text-[20px] font-normal text-[#e8e880]">恒生指数</span>
            <span className="w-20">25340.85</span>
            <span>-124.37</span>
            <span className="ml-auto">-0.49%</span>
            <button aria-label="设置" className="ml-3.5 -scale-x-100 text-[#8a8a8a]"><Wrench size={17} fill="currentColor" strokeWidth={1} /></button>
        </div>
    </div>
);

const NewsBar: React.FC = () => (
    <div className="flex h-[23px] shrink-0 items-stretch border-b border-[#7a0a0a] text-[15px] whitespace-nowrap text-[#c0c0c0]">
        {['手机', '智能问答', '解盘', '股市日记', '股灵通', '行情', '24小时滚动'].map(l => (
            <button key={l} className="shrink-0 border-r border-[#7a0a0a] pr-1 pl-[5px]">{l}</button>
        ))}
        <div className="flex flex-1 items-center gap-1 overflow-hidden text-[16px] font-bold">
            <span>迎访问同花顺金融服务网</span>
            <a href="#home" className="font-['DejaVu_Sans',sans-serif] text-[15px] text-[#e81010]">http://www.10JQKA.com.cn</a>
            <span>更多精彩等着您!</span>
        </div>
        <input aria-label="代码搜索" placeholder="代码/名称/简拼/功能" className="w-[202px] bg-[#b4b4b4] pl-1.5 text-[15px] outline-none placeholder:text-[#222]" />
        <time className={`w-[84px] pl-[9px] text-[#a8a8a8] ${NUM}`}>22:32:16</time>
    </div>
);

const Taskbar: React.FC = () => (
    <footer className="relative flex h-[38px] shrink-0 items-stretch overflow-hidden bg-linear-to-r from-[#2a2827] via-[#1f1c1b] to-[#171312] text-white">
        <svg viewBox="0 0 1360 38" preserveAspectRatio="none" className="absolute inset-0 h-full w-full">
            <path d="M180 0h180l60 8 40-6 60 14 90 22H260z" fill="#262322" />
            <path d="M350 3l40 2 30 3 22 6 12-2-4 6 10 6 4 8-24-6-20 6-16-8-24-2 14-6z" fill="#121010" />
            <path d="M540 14l20 2 24 10 36 12h-16l-44-14z" fill="#131110" />
            <path d="M690 3l90 3 80 10-60 4 60 6-110-4z" fill="#171413" />
        </svg>
        <button aria-label="开始" className="relative flex w-[45px] items-center justify-center">
            <svg viewBox="0 0 20 20" className="w-5 h-5"><path d="M0 3l8-1v7.500H0zM9 1.800 20 0v9.500H9zM0 10.500h8V18l-8-1zM9 10.500h11V20L9 18.200z" fill="#fff" /></svg>
        </button>
        <button aria-label="任务视图" className="relative flex w-[45px] items-center justify-center">
            <svg viewBox="0 0 24 22" className="w-6 h-[22px]" fill="none" stroke="#fff" strokeWidth="1.500"><path d="M5 1h14v20H5zM3 5H1v12h2M21 5h2v12h-2" /></svg>
        </button>
        <button aria-label="浏览器" className="relative ml-2 flex w-[35px] items-center justify-center border-b-[3px] border-[#f4b080]">
            <svg viewBox="0 0 20 24" className="w-5 h-6"><ellipse cx="10" cy="12" rx="9" ry="11" fill="#58b838" /><path d="M5 12h10c0-7-10-7-10 0s7 6 9 3" fill="none" stroke="#fff" strokeWidth="2.500" /></svg>
        </button>
        <button aria-label="同花顺" className="relative ml-1.5 flex w-[45px] items-center justify-center border-b-[3px] border-[#f4b080] bg-[#575453]">
            <svg viewBox="0 0 22 22" className="w-[22px] h-[22px]"><path d="M2 12C0 8 2 4 6 2l8-1c6 2 7 8 7 14l-1 6h-9z" fill="#fff" stroke="#c82020" /><path d="M12 18 3 11M12 18 5 5M12 18 10 1M12 18l4-16" stroke="#d02828" strokeWidth="1.500" /><path d="m16 8 4 8h-3v3h-2v-3h-3z" fill="#c01818" /></svg>
        </button>
        <div className="relative ml-auto flex items-center gap-3 pr-[22px]">
            <svg viewBox="0 0 18 20" className="w-[18px] h-5"><path d="M9 0l9 3c0 9-3 14-9 17C3 17 0 12 0 3z" fill="#f0f0f0" /><path d="M9 2.500l7 2c0 7-2.500 10.500-7 13-4.500-2.500-7-6-7-13z" fill="#3c9c38" /><path d="m10 5-4 6h3l-1 4 4-6H9z" fill="#fff" /></svg>
            <svg viewBox="0 0 20 20" className="w-5 h-5"><circle cx="10" cy="10" r="9.500" fill="#e8d820" /><path d="M2 15a9.500 9.500 0 0 0 16 0z" fill="#48a030" /><path d="M10 5v10M5 10h10" stroke="#185818" strokeWidth="2.500" /></svg>
            <svg viewBox="0 0 20 18" className="w-5 h-[18px]"><path d="M6 5h13v9H6zM1 3v4h4V3M3 7v5h3" fill="#fff" stroke="#fff" /></svg>
            <svg viewBox="0 0 20 18" className="w-5 h-[18px]" fill="none" stroke="#ddd"><path d="M1 7h3l4-4v12l-4-4H1zM11 6q2 3 0 6M14 4q4 5 0 10" /></svg>
            <svg viewBox="0 0 18 18" className="w-[18px] h-[18px]" fill="none" stroke="#ddd" strokeWidth="1.500"><path d="M1 17 3 12M5 17c0-5 4-9 11-10M9 17c0-3 3-5 7-6M13 17l3-2" /></svg>
            <svg viewBox="0 0 20 22" className="w-5 h-[22px]" fill="none" stroke="#fff" strokeWidth="1.500"><path d="M1 1h18v15h-6l-3 4-2-4H1zM5 6h10M5 9h10M5 12h6" /></svg>
            <span className="w-4 text-[16px]">中</span>
            <SogouLogo className="ml-1 h-[18px] w-[18px]" />
            <time className="ml-3 w-[38px] text-[15px]">22:32</time>
        </div>
        <span className="absolute right-[5px] h-full w-px bg-[#777]" />
    </footer>
);

const ImeBar: React.FC = () => (
    <div className="absolute top-[591px] right-[70px] flex h-[34px] w-[258px] items-center">
        <div className="absolute inset-y-[3px] right-0 left-5 border border-[#b8c8dc] bg-[#f8fbff]" />
        <SogouLogo className="relative h-[34px] w-[34px]" />
        <div className="relative flex flex-1 items-center justify-between pr-1 pl-1.5 text-[#2070c0]">
            <button className="text-[19px] leading-6 font-bold">中</button>
            <button aria-label="标点"><svg viewBox="0 0 16 16" className="w-4 h-4"><circle cx="3" cy="4" r="2" fill="none" stroke="currentColor" strokeWidth="1.500" /><path d="M11 7h4v4q0 3-4 4l2-4h-2z" fill="currentColor" /></svg></button>
            <button aria-label="表情"><Smile size={21} /></button>
            <button aria-label="语音"><Mic size={20} fill="currentColor" /></button>
            <button aria-label="键盘">
                <svg viewBox="0 0 20 16" className="w-5 h-4" fill="none" stroke="currentColor"><rect x="1" y="1" width="18" height="14" rx="1" strokeWidth="2" /><path d="M4 5h12M4 8h12" strokeWidth="2" strokeDasharray="2 1.300" /><path d="M6 11.500h8" strokeWidth="2" /></svg>
            </button>
            <button aria-label="账户" className="text-[#b4bccc]"><svg viewBox="0 0 18 20" className="w-[18px] h-5" fill="currentColor"><circle cx="8" cy="5" r="4" /><path d="M0 18q0-8 8-8 3 0 5 2H9v7H0z" /><path d="M10.500 12.500h7v6h-7zM14 12v3" fill="none" stroke="currentColor" /></svg></button>
            <button aria-label="皮肤"><Shirt size={20} fill="currentColor" /></button>
            <button aria-label="工具"><Wrench size={20} fill="currentColor" strokeWidth={1} /></button>
        </div>
    </div>
);

const Watermark: React.FC = () => (
    <div className="pointer-events-none absolute right-[22px] bottom-3 flex items-center gap-2 text-white">
        <svg viewBox="0 0 50 50" className="w-[50px] h-[50px]" fill="none" stroke="#fff" strokeWidth="4.500" strokeLinecap="round">
            <path d="M34 5C18-3 3 10 3 25c0 10 4 20 12 20 7 0 9-9 12-18 3-8 6-14 7-22z" />
            <path d="M27 27c4 8 9 14 12 17 12-9 10-32-2-38" /><path d="M13 14c4 1 6 4 8 8" />
        </svg>
        <span className="text-[48px] leading-[50px] font-bold">生于蛮荒</span>
    </div>
);

export default function App() {
    return (
        <div className="relative flex h-screen flex-col overflow-hidden bg-black font-['Liberation_Sans','Noto_Sans_CJK_SC',sans-serif]">
            <MenuBar />
            <Toolbar />
            <main className="flex min-h-0 flex-1 overflow-hidden">
                <SideTabs />
                <ChartPanel />
                <TradePanel />
                <OrderBook />
            </main>
            <IndexBar />
            <NewsBar />
            <Taskbar />
            <ImeBar />
            <Watermark />
        </div>
    );
}
